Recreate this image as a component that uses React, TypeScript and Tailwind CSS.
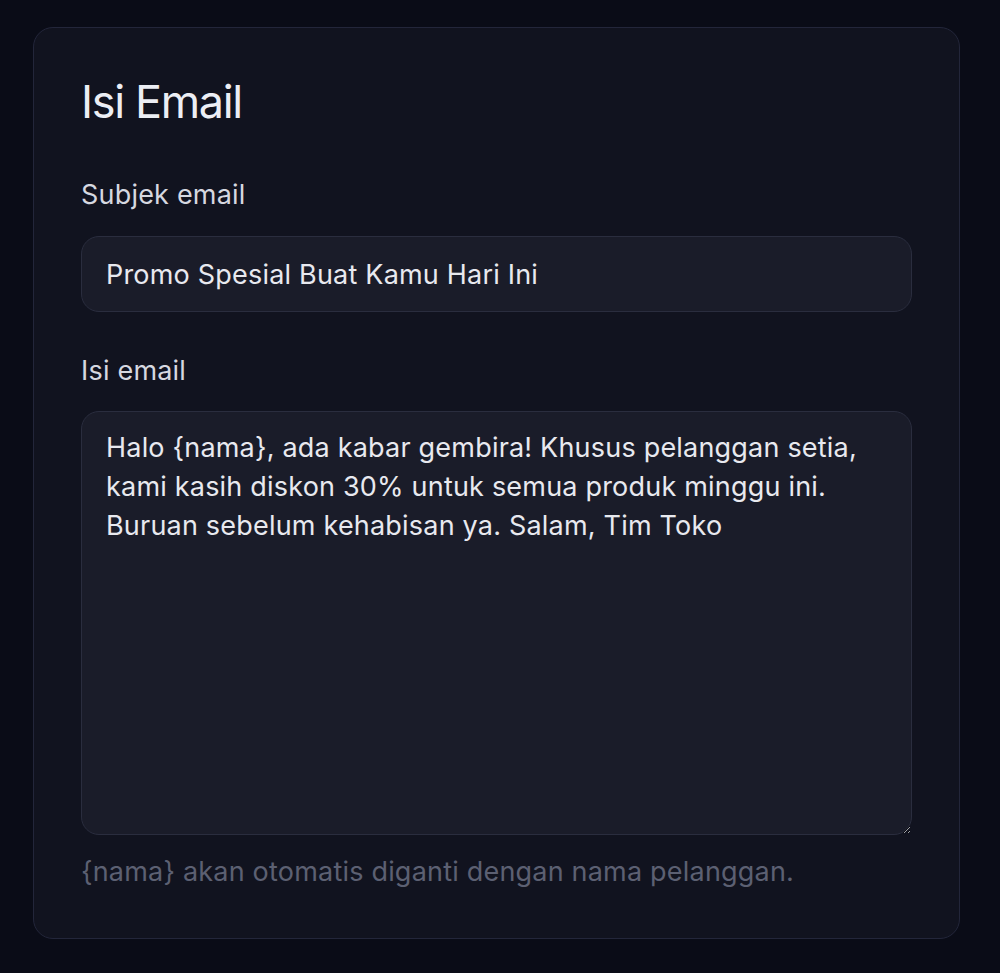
export default function App() {
  return (
    <div
      className="min-h-[973px] w-full bg-[#0a0c17] pl-[33px] pr-[40px] pt-[27px] pb-[34px]"
      style={{ fontFamily: "Inter, 'Noto Sans', sans-serif" }}
    >
      <div className="rounded-[20px] border border-[#23263a] bg-[#11131f] px-[47px] pt-[40px] pb-[46px]">
        <h2 className="text-[45px] font-normal leading-[68px] tracking-[-0.03em] text-[#eceef4]">Isi Email</h2>

        <div className="mt-[39px]">
          <label className="block text-[27px] leading-[40px] tracking-[0.2px] text-[#d6d8e0]">Subjek email</label>
          <input
            type="text"
            defaultValue="Promo Spesial Buat Kamu Hari Ini"
            className="mt-[21px] h-[76px] w-full rounded-[18px] border border-[#2a2d3e] bg-[#1a1c29] px-[24px] text-[27px] tracking-[0.2px] text-[#e8e9ef] outline-none"
          />
        </div>

        <div className="mt-[39px]">
          <label className="block text-[27px] leading-[40px] tracking-[0.2px] text-[#d6d8e0]">Isi email</label>
          <textarea
            defaultValue="Halo {nama}, ada kabar gembira! Khusus pelanggan setia, kami kasih diskon 30% untuk semua produk minggu ini. Buruan sebelum kehabisan ya. Salam, Tim Toko"
            className="mt-[20px] block h-[424px] w-full rounded-[18px] border border-[#2a2d3e] bg-[#1a1c29] px-[24px] py-[16px] text-[27px] leading-[39px] tracking-[0.2px] text-[#e8e9ef] outline-none [color-scheme:dark]"
          />
          <p className="mt-[17px] text-[27px] leading-[40px] tracking-[0.2px] text-[#5c6072]">
            {"{nama} akan otomatis diganti dengan nama pelanggan."}
          </p>
        </div>
      </div>
    </div>
  );
}
